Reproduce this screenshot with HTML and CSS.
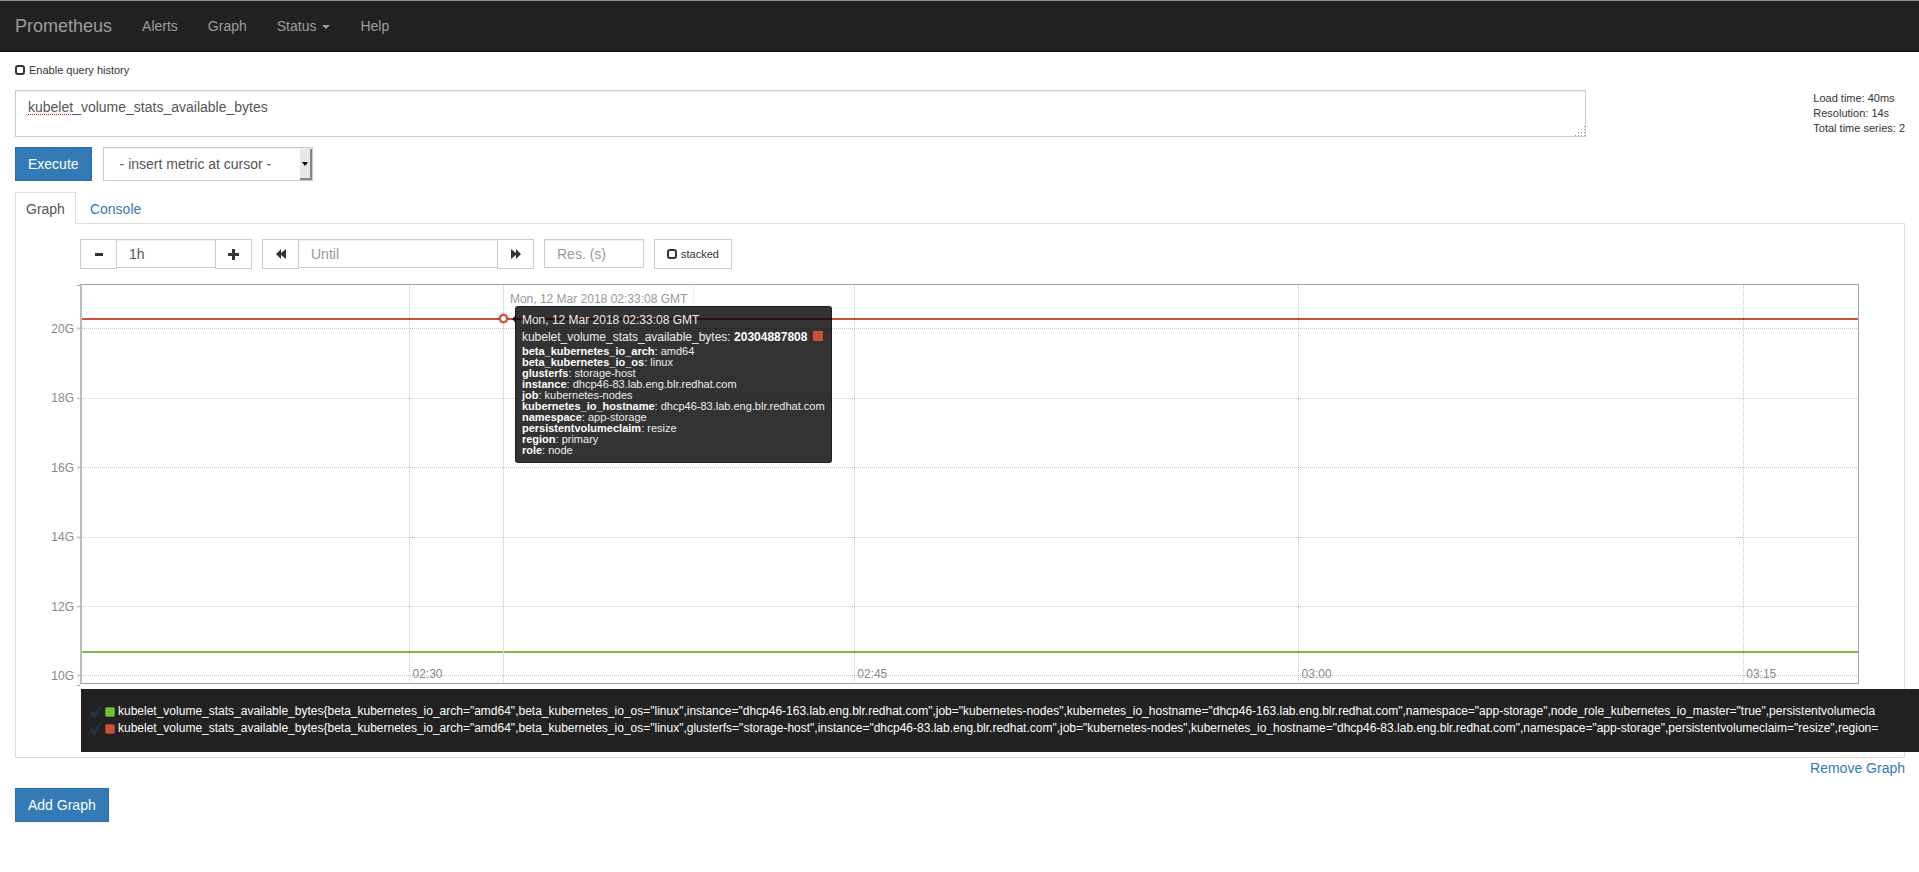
FILE: index.html
```html
<!DOCTYPE html>
<html lang="en">
<head>
<meta charset="utf-8">
<title>Prometheus Time Series Collection and Processing Server</title>
<link rel="stylesheet" href="styles.css">
</head>
<body>
<nav class="navbar">
  <a class="brand" href="#">Prometheus</a>
  <a class="nav-link" href="#">Alerts</a>
  <a class="nav-link" href="#">Graph</a>
  <a class="nav-link" href="#">Status <span class="caret"></span></a>
  <a class="nav-link" href="#">Help</a>
</nav>
<main class="container">
  <label class="history"><input class="check" type="checkbox">Enable query history</label>

  <div class="query-row">
    <div class="expression">
      <textarea class="field expr-input" aria-label="Expression" spellcheck="false">kubelet_volume_stats_available_bytes</textarea>
      <span class="misspelled"></span>
      <svg class="grip" width="10" height="10" viewBox="0 0 10 10" fill="#999"><path d="M9 0h1v1h-1zM6 3h1v1h-1zM9 3h1v1h-1zM3 6h1v1h-1zM6 6h1v1h-1zM9 6h1v1h-1zM0 9h1v1h-1zM3 9h1v1h-1zM6 9h1v1h-1zM9 9h1v1h-1z"/></svg>
    </div>
    <div class="stats">
      <div>Load time: 40ms</div>
      <div>Resolution: 14s</div>
      <div>Total time series: 2</div>
    </div>
  </div>

  <div class="execute-row">
    <button class="btn-primary" type="button">Execute</button>
    <div class="metric-select">
      <select class="field" aria-label="Metric"><option>- insert metric at cursor -</option></select>
      <span class="select-button"><span class="select-arrow"></span></span>
    </div>
  </div>

  <div class="tabs">
    <a class="tab tab-active" href="#">Graph</a>
    <a class="tab" href="#">Console</a>
  </div>

  <section class="panel">
    <div class="controls">
      <div class="group">
        <button class="btn" type="button" aria-label="Shrink range"><svg width="12" height="12" viewBox="0 0 12 12"><path d="M2 5h8v3H2z"/></svg></button>
        <input class="field small short" type="text" value="1h" aria-label="Range">
        <button class="btn" type="button" aria-label="Grow range"><svg width="12" height="12" viewBox="0 0 12 12"><path d="M4 1h3v4h4v3H7v4H4V8H0V5h4z"/></svg></button>
      </div>
      <div class="group">
        <button class="btn" type="button" aria-label="Earlier"><svg width="12" height="12" viewBox="0 0 12 12"><path d="M1 6l5-5v4l5-4v10L6 7v4z"/></svg></button>
        <input class="field small long" type="text" placeholder="Until" aria-label="Until">
        <button class="btn" type="button" aria-label="Later"><svg width="12" height="12" viewBox="0 0 12 12"><path d="M11 6L6 1v4L1 1v10l5-4v4z"/></svg></button>
      </div>
      <input class="field small short" type="text" placeholder="Res. (s)" aria-label="Resolution">
      <label class="stacked"><input class="check" type="checkbox">stacked</label>
    </div>

    <div class="chart">
      <svg class="y-axis" width="64" height="403">
        <g class="axis-text" text-anchor="end">
          <text x="58" y="49">20G</text><text x="58" y="118">18G</text><text x="58" y="188">16G</text>
          <text x="58" y="257">14G</text><text x="58" y="327">12G</text><text x="58" y="396">10G</text>
        </g>
        <path class="axis-tick" d="M61 44.5h4M61 114.5h4M61 183.5h4M61 253.5h4M61 322.5h4M61 391.5h4"/>
        <path class="axis-line" d="M61 1.5h4M61 401.5h4"/>
      </svg>
      <div class="plot">
        <svg class="plot-svg" width="100%" height="400">
          <g class="series">
            <line class="red" x1="0" x2="100%" y1="34" y2="34"/>
            <line class="green" x1="0" x2="100%" y1="367" y2="367"/>
          </g>
          <g class="grid">
            <line x1="0" x2="100%" y1="43.5" y2="43.5"/>
            <line x1="0" x2="100%" y1="113.5" y2="113.5"/>
            <line x1="0" x2="100%" y1="182.5" y2="182.5"/>
            <line x1="0" x2="100%" y1="252.5" y2="252.5"/>
            <line x1="0" x2="100%" y1="321.5" y2="321.5"/>
            <line x1="0" x2="100%" y1="390.5" y2="390.5"/>
          </g>
          <g class="grid grid-x">
            <line x1="18.44%" x2="18.44%" y1="0" y2="100%"/>
            <line x1="43.48%" x2="43.48%" y1="0" y2="100%"/>
            <line x1="68.5%" x2="68.5%" y1="0" y2="100%"/>
            <line x1="93.54%" x2="93.54%" y1="0" y2="100%"/>
          </g>
          <g class="axis-text">
            <text x="18.44%" dx="3" y="393">02:30</text>
            <text x="43.48%" dx="3" y="393">02:45</text>
            <text x="68.5%" dx="3" y="393">03:00</text>
            <text x="93.54%" dx="3" y="393">03:15</text>
          </g>
        </svg>
        <div class="hover">
          <div class="hover-time">Mon, 12 Mar 2018 02:33:08 GMT</div>
          <span class="hover-dot"></span>
          <div class="tooltip">
            <span class="tip-swatch"></span>
            <div class="tip-date">Mon, 12 Mar 2018 02:33:08 GMT</div>
            <div class="tip-value">kubelet_volume_stats_available_bytes: <strong>20304887808</strong></div>
            <div class="tip-labels">
              <div><strong>beta_kubernetes_io_arch</strong>: amd64</div>
              <div><strong>beta_kubernetes_io_os</strong>: linux</div>
              <div><strong>glusterfs</strong>: storage-host</div>
              <div><strong>instance</strong>: dhcp46-83.lab.eng.blr.redhat.com</div>
              <div><strong>job</strong>: kubernetes-nodes</div>
              <div><strong>kubernetes_io_hostname</strong>: dhcp46-83.lab.eng.blr.redhat.com</div>
              <div><strong>namespace</strong>: app-storage</div>
              <div><strong>persistentvolumeclaim</strong>: resize</div>
              <div><strong>region</strong>: primary</div>
              <div><strong>role</strong>: node</div>
            </div>
          </div>
        </div>
      </div>
    </div>

    <div class="legend">
      <div class="legend-row">
        <svg class="tick" width="12" height="12" viewBox="0 0 12 12"><path d="M0 7l2-2 2 3 6-8h2L5 12H3z"/></svg>
        <span class="swatch swatch-green"></span>
        <span>kubelet_volume_stats_available_bytes{beta_kubernetes_io_arch="amd64",beta_kubernetes_io_os="linux",instance="dhcp46-163.lab.eng.blr.redhat.com",job="kubernetes-nodes",kubernetes_io_hostname="dhcp46-163.lab.eng.blr.redhat.com",namespace="app-storage",node_role_kubernetes_io_master="true",persistentvolumecla</span>
      </div>
      <div class="legend-row">
        <svg class="tick" width="12" height="12" viewBox="0 0 12 12"><path d="M0 7l2-2 2 3 6-8h2L5 12H3z"/></svg>
        <span class="swatch swatch-red"></span>
        <span>kubelet_volume_stats_available_bytes{beta_kubernetes_io_arch="amd64",beta_kubernetes_io_os="linux",glusterfs="storage-host",instance="dhcp46-83.lab.eng.blr.redhat.com",job="kubernetes-nodes",kubernetes_io_hostname="dhcp46-83.lab.eng.blr.redhat.com",namespace="app-storage",persistentvolumeclaim="resize",region=</span>
      </div>
    </div>
  </section>

  <div class="remove-row"><a href="#">Remove Graph</a></div>
  <button class="btn-primary" type="button">Add Graph</button>
</main>
</body>
</html>
```
FILE: styles.css
```css
* { box-sizing: border-box; }
body {
  margin: 0;
  overflow-x: hidden;
  background: #fff;
  color: #333;
  font: 14px/20px "Liberation Sans", Arial, sans-serif;
}
a { color: #337ab7; text-decoration: none; }
button, input, select, textarea { font: inherit; margin: 0; border-radius: 0; }

.navbar {
  display: flex;
  align-items: center;
  height: 52px;
  background: #222;
  border-top: 1px solid #8f8f8a;
  border-bottom: 1px solid #080808;
}
.brand { padding: 0 15px; font-size: 18px; color: #9d9d9d; }
.nav-link { padding: 0 15px; color: #9d9d9d; }
.caret {
  display: inline-block;
  margin-left: 2px;
  vertical-align: middle;
  border-top: 4px solid;
  border-left: 4px solid transparent;
  border-right: 4px solid transparent;
}

.container { padding: 10px 14px 10px 15px; }
.history { display: flex; align-items: center; gap: 4px; width: max-content; height: 16px; font-size: 11px; }
.check {
  appearance: none;
  flex: none;
  width: 10px;
  height: 10px;
  border: 2px solid #333;
  border-radius: 3px;
}
.field {
  background: #fff;
  color: #555;
  border: 1px solid #ccc;
  box-shadow: inset 0 1px 1px rgba(0, 0, 0, .075);
  padding: 6px 12px;
}
.field::placeholder { color: #999; opacity: 1; }

.query-row { display: flex; justify-content: space-between; margin-top: 12px; }
.expression { position: relative; flex: 0 0 83.1%; display: flex; }
.expr-input { width: 100%; height: 47px; resize: none; overflow: hidden; }
.misspelled { position: absolute; left: 13px; top: 24px; width: 45px; border-bottom: 1px dotted #f00; }
.grip { position: absolute; right: 1px; bottom: 1px; }
.stats { padding-top: 1px; font-size: 11px; line-height: 15px; }

.execute-row { display: flex; gap: 11px; margin-top: 10px; }
.btn-primary {
  height: 34px;
  padding: 0 12px;
  color: #fff;
  background: #337ab7;
  border: 1px solid #2e6da4;
}
.metric-select { position: relative; width: 210px; }
.metric-select select { appearance: none; width: 100%; height: 34px; padding: 6px 16px; }
.select-button {
  position: absolute;
  top: 2px;
  right: 1px;
  bottom: 1px;
  width: 12px;
  display: flex;
  align-items: center;
  justify-content: center;
  background: #e8e8e7;
  border-right: 2px solid #858585;
  border-bottom: 2px solid #858585;
  pointer-events: none;
}
.select-arrow { border-top: 4px solid #000; border-left: 3px solid transparent; border-right: 3px solid transparent; }

.tabs { display: flex; gap: 2px; margin-top: 11px; }
.tab { height: 31px; padding: 6px 11px; border: 1px solid transparent; border-bottom: 0; }
.tab-active { position: relative; height: 32px; margin-bottom: -1px; padding: 6px 10px; color: #555; background: #fff; border-color: #ddd; }

.panel { border: 1px solid #ddd; padding: 15px 0 5px; }
.controls { display: flex; gap: 10px; padding-left: 64px; align-items: flex-start; }
.group { display: flex; align-items: flex-start; }
.btn {
  width: 37px;
  height: 30px;
  padding: 0;
  display: flex;
  align-items: center;
  justify-content: center;
  background: #fff;
  border: 1px solid #ccc;
  fill: #333;
}
.small { height: 29px; padding: 4px 12px; }
.short { width: 100px; }
.long { width: 200px; }
.group .small { margin: 0 -1px; }
.stacked {
  display: flex;
  align-items: center;
  gap: 4px;
  height: 30px;
  padding: 0 12px;
  border: 1px solid #ccc;
  font-size: 11px;
}

.chart { display: flex; margin: 15px 45px 0 0; }
.y-axis { flex: none; }
.axis-text { font-size: 12px; fill: #888; }
.axis-line { stroke: #aaa; stroke-width: 1; fill: none; }
.axis-tick { stroke: #ccc; stroke-width: 2; fill: none; }
.plot { position: relative; flex: 1; height: 400px; border: 1px solid #a5a5a5; border-left: 2px solid #bbb; }
.plot-svg { display: block; height: 398px; }
.series line { stroke-width: 2; }
.red { stroke: #cb513a; }
.green { stroke: #73c03a; }
.grid line { stroke: rgba(0, 0, 0, .22); stroke-dasharray: 1 1; shape-rendering: crispEdges; }

.hover { position: absolute; top: 0; bottom: 0; left: 23.7%; border-left: 1px solid #ddd; }
.hover-time {
  height: 30px;
  padding: 4px 6px;
  border-right: 1px solid #eee;
  background: rgba(255, 255, 255, .5);
  color: #999;
  font-size: 12px;
  white-space: nowrap;
}
.hover-dot {
  position: absolute;
  left: -5px;
  top: 29px;
  width: 9px;
  height: 9px;
  border: 2px solid #cb513a;
  border-radius: 50%;
  background: #fff;
  box-shadow: 0 0 3px rgba(0, 0, 0, .5);
}
.tooltip {
  position: absolute;
  left: 11px;
  top: 21px;
  padding: 6px;
  border: 1px solid rgba(0, 0, 0, .4);
  border-radius: 3px;
  background: rgba(0, 0, 0, .8);
  color: #eee;
  font-size: 12px;
  white-space: nowrap;
}
.tooltip::before {
  content: "";
  position: absolute;
  left: -4px;
  top: 8px;
  border: 4px solid transparent;
  border-left: 0;
  border-right-color: rgba(0, 0, 0, .8);
}
.tip-date { line-height: 14px; }
.tip-value { position: relative; padding-top: 1px; line-height: 18px; }
.tip-value strong { color: #fff; }
.tip-swatch { position: absolute; right: 8px; top: 24px; width: 10px; height: 10px; background: #cb513a; }
.tip-labels { font-size: 11px; line-height: 11px; }
.tip-labels strong { color: #fff; }

.legend {
  width: max-content;
  min-width: calc(100% - 26px);
  margin: 2px 0 0 65px;
  padding: 14px 9px 15px;
  background: #222;
  color: #fff;
  font-size: 12px;
  line-height: 17px;
  white-space: nowrap;
}
.legend-row { display: flex; align-items: center; }
.tick { fill: #213547; }
.swatch { width: 10px; height: 10px; margin: 0 3px; border: 1px solid rgba(0, 0, 0, .2); border-radius: 2px; }
.swatch-green { background: #73c03a; }
.swatch-red { background: #cb513a; }

.remove-row { display: flex; justify-content: flex-end; margin-bottom: 10px; }
```
